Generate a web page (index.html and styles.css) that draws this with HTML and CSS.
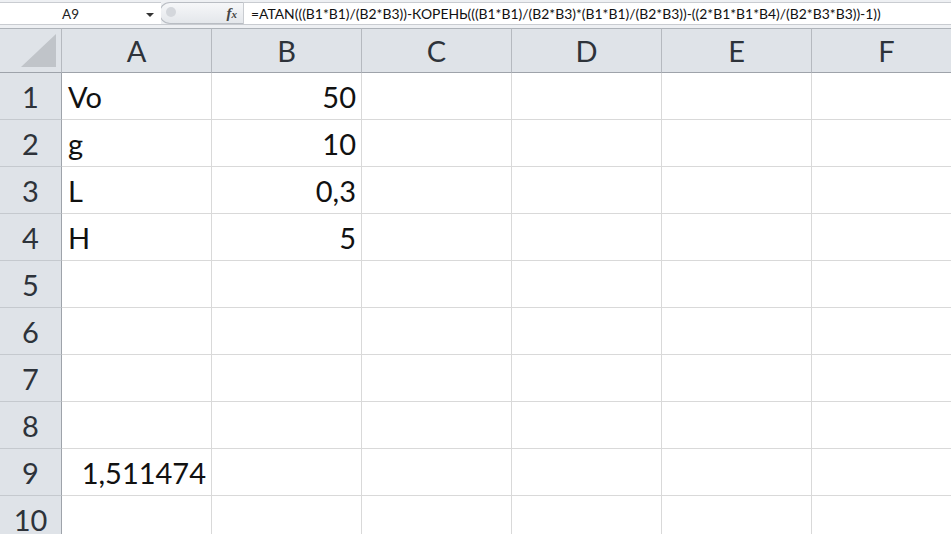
FILE: index.html
```html
<!DOCTYPE html>
<html>
<head>
<meta charset="utf-8">
<link rel="stylesheet" href="styles.css">
</head>
<body>
<div class="app">
  <div class="fbar">
    <div class="namebox"><span class="ref">A9</span><span class="arrow"></span></div>
    <div class="pill"><span class="knob"></span><span class="fx"><i>f</i><span class="fxx">x</span></span></div>
    <div class="formula">=ATAN(((B1*B1)/(B2*B3))-КОРЕНЬ(((B1*B1)/(B2*B3)*(B1*B1)/(B2*B3))-((2*B1*B1*B4)/(B2*B3*B3))-1))</div>
  </div>
  <div class="band"></div>
  <div class="sheet">
    <div class="hd corner"><svg class="tri" width="36" height="34" viewBox="0 0 36 34"><polygon points="0,33 35,33 35,0" fill="#c0c4c9"/></svg></div>
    <div class="hd col">A</div>
    <div class="hd col">B</div>
    <div class="hd col">C</div>
    <div class="hd col">D</div>
    <div class="hd col">E</div>
    <div class="hd col">F</div>

    <div class="rh">1</div><div class="c l">Vo</div><div class="c r">50</div><div class="c"></div><div class="c"></div><div class="c"></div><div class="c"></div>
    <div class="rh">2</div><div class="c l">g</div><div class="c r">10</div><div class="c"></div><div class="c"></div><div class="c"></div><div class="c"></div>
    <div class="rh">3</div><div class="c l">L</div><div class="c r">0,3</div><div class="c"></div><div class="c"></div><div class="c"></div><div class="c"></div>
    <div class="rh">4</div><div class="c l">H</div><div class="c r">5</div><div class="c"></div><div class="c"></div><div class="c"></div><div class="c"></div>
    <div class="rh">5</div><div class="c"></div><div class="c"></div><div class="c"></div><div class="c"></div><div class="c"></div><div class="c"></div>
    <div class="rh">6</div><div class="c"></div><div class="c"></div><div class="c"></div><div class="c"></div><div class="c"></div><div class="c"></div>
    <div class="rh">7</div><div class="c"></div><div class="c"></div><div class="c"></div><div class="c"></div><div class="c"></div><div class="c"></div>
    <div class="rh">8</div><div class="c"></div><div class="c"></div><div class="c"></div><div class="c"></div><div class="c"></div><div class="c"></div>
    <div class="rh">9</div><div class="c r">1,511474</div><div class="c"></div><div class="c"></div><div class="c"></div><div class="c"></div><div class="c"></div>
    <div class="rh">10</div><div class="c"></div><div class="c"></div><div class="c"></div><div class="c"></div><div class="c"></div><div class="c"></div>
  </div>
</div>
</body>
</html>
```
FILE: styles.css
```css
html, body {
  margin: 0;
  padding: 0;
  background: #fff;
}
.app {
  width: 951px;
  height: 534px;
  overflow: hidden;
  font-family: Lato, "Open Sans", "Liberation Sans", sans-serif;
  color: #111;
}
.fbar {
  height: 25px;
  display: flex;
  align-items: stretch;
  background: #eef0f3;
  padding-top: 2px;
  box-sizing: border-box;
  border-bottom: 1px solid #c9ccd1;
}
.namebox {
  width: 161px;
  background: #fff;
  border-top: 1px solid #c9ccd1;
  display: flex;
  align-items: center;
  position: relative;
  font-size: 13.5px;
  color: #222;
}
.ref {
  margin-left: 62px;
}
.arrow {
  position: absolute;
  left: 146px;
  top: 10px;
  width: 0;
  height: 0;
  border-left: 4px solid transparent;
  border-right: 4px solid transparent;
  border-top: 4px solid #333;
}
.pill {
  width: 84px;
  margin-left: -2px;
  border: 1px solid #b9bdc3;
  border-right: none;
  border-radius: 11px 0 0 11px;
  background: linear-gradient(#f6f7f9, #e4e7eb);
  display: flex;
  align-items: center;
  justify-content: space-between;
  padding: 0 6px 0 6px;
  box-sizing: border-box;
}
.knob {
  width: 10px;
  height: 10px;
  border-radius: 50%;
  background: #d4d7dc;
  margin-bottom: 3px;
}
.fx {
  font-family: "Liberation Serif", serif;
  font-size: 15px;
  font-weight: bold;
  color: #444;
}
.fx i {
  font-style: italic;
}
.fxx {
  font-size: 11px;
  font-style: italic;
}
.formula {
  flex: 1;
  background: #fff;
  border-top: 1px solid #c9ccd1;
  border-left: 1px solid #c9ccd1;
  font-size: 13.9px;
  color: #111;
  padding-left: 7px;
  display: flex;
  align-items: center;
  white-space: nowrap;
  overflow: hidden;
}
.band {
  height: 3px;
  background: #eef0f3;
}
.sheet {
  display: grid;
  grid-template-columns: 62px repeat(6, 150px);
  grid-template-rows: 45px repeat(10, 47px);
}
.hd {
  background: #dfe3e8;
  border-top: 1px solid #aeb3b9;
  border-bottom: 1px solid #9ea3aa;
  border-right: 1px solid #b5b9bf;
  box-sizing: border-box;
  font-size: 29px;
  color: #2e333a;
  display: flex;
  align-items: center;
  justify-content: center;
}
.corner {
  align-items: flex-end;
  justify-content: flex-end;
  padding: 0 4px 4px 0;
}
.tri {
  display: block;
}
.rh {
  background: #dfe3e8;
  border-right: 1px solid #9ea3aa;
  border-bottom: 1px solid #c5c9ce;
  box-sizing: border-box;
  font-size: 29px;
  color: #2e333a;
  display: flex;
  align-items: center;
  justify-content: center;
}
.c {
  border-right: 1px solid #d9d9d9;
  border-bottom: 1px solid #d9d9d9;
  box-sizing: border-box;
  font-size: 29px;
  color: #111;
  display: flex;
  align-items: center;
  padding: 0 5px 0 6px;
}
.c.r {
  justify-content: flex-end;
}
.c.l {
  justify-content: flex-start;
}
```
